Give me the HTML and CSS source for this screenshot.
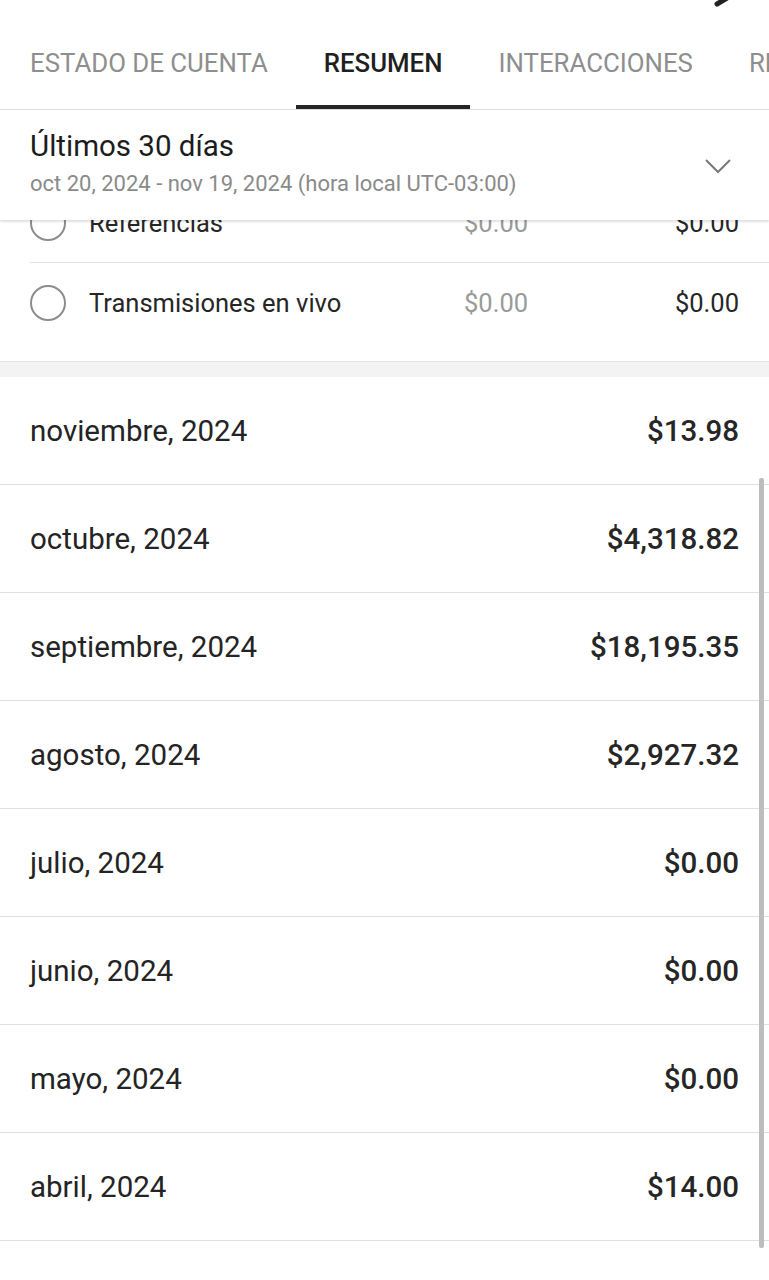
FILE: index.html
```html
<!DOCTYPE html>
<html lang="es">
<head>
<meta charset="utf-8">
<link rel="stylesheet" href="styles.css">
</head>
<body>
<div class="app">
  <div class="appbar">
    <svg class="appbar-icon" width="30" height="20" viewBox="0 0 30 20"><path d="M4 6 L14 0" stroke="#222" stroke-width="5" stroke-linecap="round" fill="none"/></svg>
  </div>
  <nav class="tabs">
    <div class="tab">ESTADO DE CUENTA</div>
    <div class="tab active">RESUMEN</div>
    <div class="tab">INTERACCIONES</div>
    <div class="tab">REPRODUCCIONES</div>
  </nav>
  <header class="period">
    <div class="period-text">
      <div class="period-title">Últimos 30 días</div>
      <div class="period-sub">oct 20, 2024 - nov 19, 2024 (hora local UTC-03:00)</div>
    </div>
    <svg class="chevron" width="28" height="16" viewBox="0 0 28 16"><path d="M2 2 L14 14 L26 2" stroke="#7a7a7a" stroke-width="2" fill="none"/></svg>
  </header>
  <section class="card">
    <div class="clip">
      <div class="src-row">
        <span class="radio"></span>
        <span class="src-name">Referencias</span>
        <span class="src-prev">$0.00</span>
        <span class="src-val">$0.00</span>
      </div>
    </div>
    <div class="src-row last">
      <span class="radio"></span>
      <span class="src-name">Transmisiones en vivo</span>
      <span class="src-prev">$0.00</span>
      <span class="src-val">$0.00</span>
    </div>
  </section>
  <div class="gap"></div>
  <section class="months">
    <div class="month"><span>noviembre, 2024</span><span class="amt">$13.98</span></div>
    <div class="month"><span>octubre, 2024</span><span class="amt">$4,318.82</span></div>
    <div class="month"><span>septiembre, 2024</span><span class="amt">$18,195.35</span></div>
    <div class="month"><span>agosto, 2024</span><span class="amt">$2,927.32</span></div>
    <div class="month"><span>julio, 2024</span><span class="amt">$0.00</span></div>
    <div class="month"><span>junio, 2024</span><span class="amt">$0.00</span></div>
    <div class="month"><span>mayo, 2024</span><span class="amt">$0.00</span></div>
    <div class="month"><span>abril, 2024</span><span class="amt">$14.00</span></div>
    <div class="month"><span>marzo, 2024</span><span class="amt">$0.00</span></div>
  </section>
  <div class="scrollbar"></div>
</div>
</body>
</html>
```
FILE: styles.css
```css
html, body {
  margin: 0;
  padding: 0;
  background: #ffffff;
  overflow: hidden;
}
body {
  font-family: Roboto, "Noto Sans", sans-serif;
  color: #212121;
}
.app {
  position: relative;
  width: 769px;
  height: 1280px;
  overflow: hidden;
}
.appbar {
  height: 20px;
  display: flex;
  justify-content: flex-end;
  padding-right: 26px;
}
.appbar-icon {
  margin-top: -2px;
}
.tabs {
  height: 89px;
  display: flex;
  white-space: nowrap;
  border-bottom: 1px solid #dddddd;
  overflow: hidden;
}
.tab {
  flex: none;
  padding: 0 28px;
  font-size: 25.8px;
  font-weight: 400;
  color: #8e8e8e;
  display: flex;
  align-items: center;
  height: 85px;
  border-bottom: 4px solid transparent;
}
.tab:first-child {
  padding-left: 30px;
}
.tab.active {
  color: #1f1f1f;
  font-weight: 500;
  border-bottom-color: #262626;
}
.period {
  height: 110px;
  display: flex;
  align-items: center;
  justify-content: space-between;
  padding: 0 37px 0 30px;
  box-shadow: 0 2px 2px rgba(0,0,0,0.12);
  position: relative;
  z-index: 1;
  background: #fff;
}
.period-text {
  display: flex;
  flex-direction: column;
  gap: 8px;
  margin-top: -6px;
}
.period-title {
  font-size: 29.5px;
  font-weight: 400;
  color: #1c1c1c;
}
.period-sub {
  font-size: 22px;
  color: #8a8a8a;
}
.chevron {
  margin-top: 2px;
}
.card {
  padding-bottom: 18px;
  border-bottom: 1px solid #e3e3e3;
}
.clip {
  height: 43px;
  overflow: hidden;
  display: flex;
  flex-direction: column;
  justify-content: flex-end;
}
.src-row {
  flex: none;
  height: 79px;
  margin-left: 30px;
  padding-right: 30px;
  display: flex;
  align-items: center;
  border-bottom: 1px solid #e3e3e3;
  font-size: 25.5px;
}
.src-row.last {
  border-bottom: none;
  height: 80px;
}
.radio {
  flex: none;
  width: 32px;
  height: 32px;
  border: 2.5px solid #8c8c8c;
  border-radius: 50%;
  margin-right: 23px;
}
.src-name {
  width: 375px;
  color: #262626;
}
.src-prev {
  color: #9a9a9a;
  width: 100px;
}
.src-val {
  margin-left: auto;
  color: #262626;
}
.gap {
  height: 15px;
  background: #f3f3f3;
}
.months {
  display: flex;
  flex-direction: column;
}
.month {
  height: 107px;
  border-bottom: 1px solid #e0e0e0;
  display: flex;
  align-items: center;
  justify-content: space-between;
  padding: 0 30px;
  font-size: 29.5px;
  color: #242424;
}
.month .amt {
  font-weight: 500;
  color: #262626;
}
.scrollbar {
  position: absolute;
  left: 759px;
  top: 478px;
  width: 5px;
  height: 770px;
  background: #bdbdbd;
  border-radius: 2px;
}
```
